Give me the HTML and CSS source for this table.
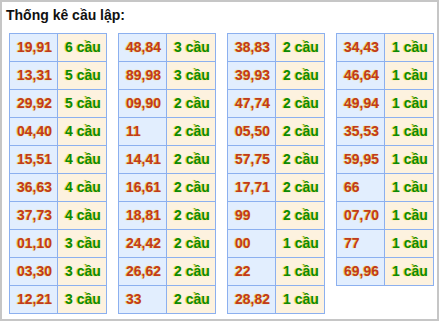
FILE: index.html
```html
<!DOCTYPE html>
<html lang="vi">
<head>
<meta charset="utf-8">
<title>Thống kê cầu lập</title>
<link rel="stylesheet" href="styles.css">
</head>
<body>
<div class="box">
  <h3 class="title">Thống kê cầu lập:</h3>
  <div class="tables">
    <table class="tk">
      <tr><td class="num">19,91</td><td class="cnt">6 cầu</td></tr>
      <tr><td class="num">13,31</td><td class="cnt">5 cầu</td></tr>
      <tr><td class="num">29,92</td><td class="cnt">5 cầu</td></tr>
      <tr><td class="num">04,40</td><td class="cnt">4 cầu</td></tr>
      <tr><td class="num">15,51</td><td class="cnt">4 cầu</td></tr>
      <tr><td class="num">36,63</td><td class="cnt">4 cầu</td></tr>
      <tr><td class="num">37,73</td><td class="cnt">4 cầu</td></tr>
      <tr><td class="num">01,10</td><td class="cnt">3 cầu</td></tr>
      <tr><td class="num">03,30</td><td class="cnt">3 cầu</td></tr>
      <tr><td class="num">12,21</td><td class="cnt">3 cầu</td></tr>
    </table>
    <table class="tk">
      <tr><td class="num">48,84</td><td class="cnt">3 cầu</td></tr>
      <tr><td class="num">89,98</td><td class="cnt">3 cầu</td></tr>
      <tr><td class="num">09,90</td><td class="cnt">2 cầu</td></tr>
      <tr><td class="num">11</td><td class="cnt">2 cầu</td></tr>
      <tr><td class="num">14,41</td><td class="cnt">2 cầu</td></tr>
      <tr><td class="num">16,61</td><td class="cnt">2 cầu</td></tr>
      <tr><td class="num">18,81</td><td class="cnt">2 cầu</td></tr>
      <tr><td class="num">24,42</td><td class="cnt">2 cầu</td></tr>
      <tr><td class="num">26,62</td><td class="cnt">2 cầu</td></tr>
      <tr><td class="num">33</td><td class="cnt">2 cầu</td></tr>
    </table>
    <table class="tk">
      <tr><td class="num">38,83</td><td class="cnt">2 cầu</td></tr>
      <tr><td class="num">39,93</td><td class="cnt">2 cầu</td></tr>
      <tr><td class="num">47,74</td><td class="cnt">2 cầu</td></tr>
      <tr><td class="num">05,50</td><td class="cnt">2 cầu</td></tr>
      <tr><td class="num">57,75</td><td class="cnt">2 cầu</td></tr>
      <tr><td class="num">17,71</td><td class="cnt">2 cầu</td></tr>
      <tr><td class="num">99</td><td class="cnt">2 cầu</td></tr>
      <tr><td class="num">00</td><td class="cnt">1 cầu</td></tr>
      <tr><td class="num">22</td><td class="cnt">1 cầu</td></tr>
      <tr><td class="num">28,82</td><td class="cnt">1 cầu</td></tr>
    </table>
    <table class="tk">
      <tr><td class="num">34,43</td><td class="cnt">1 cầu</td></tr>
      <tr><td class="num">46,64</td><td class="cnt">1 cầu</td></tr>
      <tr><td class="num">49,94</td><td class="cnt">1 cầu</td></tr>
      <tr><td class="num">35,53</td><td class="cnt">1 cầu</td></tr>
      <tr><td class="num">59,95</td><td class="cnt">1 cầu</td></tr>
      <tr><td class="num">66</td><td class="cnt">1 cầu</td></tr>
      <tr><td class="num">07,70</td><td class="cnt">1 cầu</td></tr>
      <tr><td class="num">77</td><td class="cnt">1 cầu</td></tr>
      <tr><td class="num">69,96</td><td class="cnt">1 cầu</td></tr>
    </table>
  </div>
</div>
</body>
</html>
```
FILE: styles.css
```css
html, body {
  margin: 0;
  padding: 0;
  background: #ffffff;
}
body {
  font-family: "Liberation Sans", Arial, sans-serif;
}
.box {
  box-sizing: border-box;
  width: 439px;
  height: 321px;
  border: 2px solid #c6c6c6;
  background: #ffffff;
  padding: 0 0 0 7px;
}
.title {
  margin: 0 0 0 -3px;
  padding: 5px 0 0 0;
  font-size: 14px;
  font-weight: bold;
  line-height: 16px;
  color: #111111;
}
.tables {
  display: flex;
  align-items: flex-start;
  gap: 11px;
  margin-top: 10px;
}
.tk {
  border-collapse: separate;
  border-spacing: 1px;
  background: #8cb0ef;
}
.tk td {
  padding: 0 0 0 7px;
  height: 27px;
  line-height: 27px;
  font-size: 14px;
  font-weight: bold;
  white-space: nowrap;
}
.num {
  width: 40px;
  background: #e2eefe;
  color: #c03a20;
  text-shadow: -1px 0 1px #f0c000;
}
.cnt {
  width: 41px;
  background: #fdf2df;
  color: #0a8a0a;
  text-shadow: -1px 0 1px #f0d400;
}
```
